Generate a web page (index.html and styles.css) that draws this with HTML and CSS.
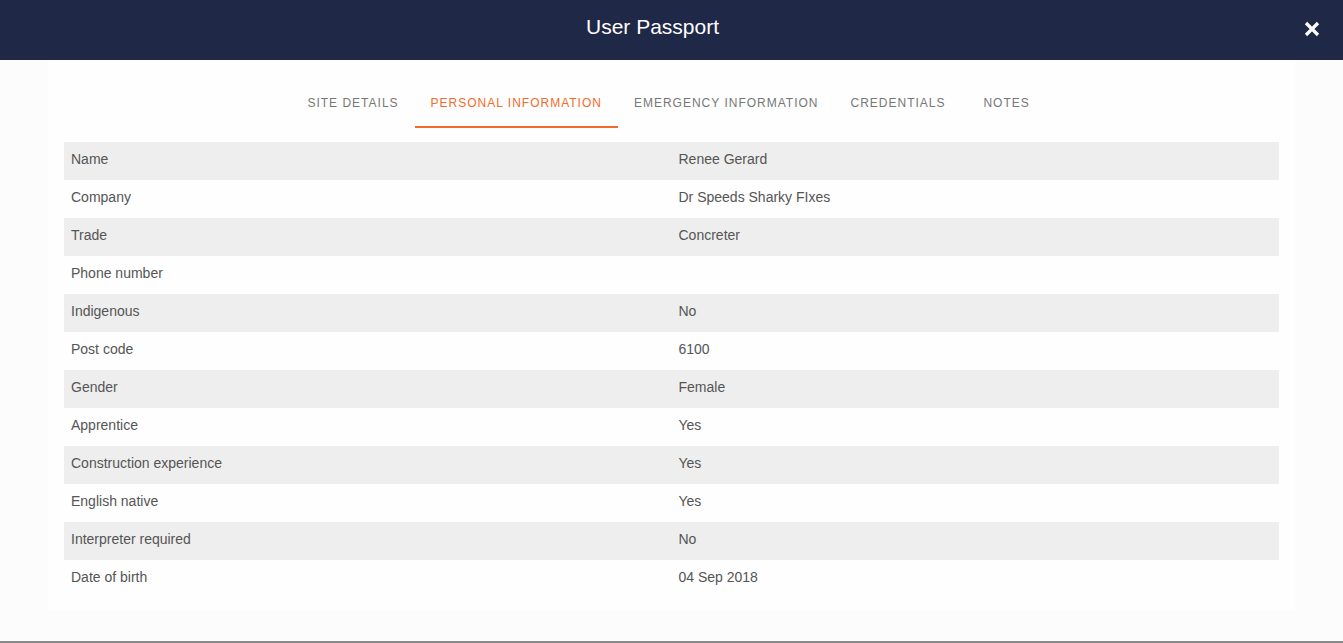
FILE: index.html
```html
<!DOCTYPE html>
<html lang="en">
<head>
    <meta charset="UTF-8">
    <meta name="viewport" content="width=device-width, initial-scale=1.0">
    <title>User Passport</title>
    <link rel="stylesheet" href="styles.css">
</head>
<body>
    <div class="modal">
        <header class="modal-header">
            <h1>User Passport</h1>
            <button class="close-button" aria-label="Close">
                <svg width="16" height="16" viewBox="0 0 16 16">
                    <path d="M2 2 L14 14 M14 2 L2 14" stroke="#fff" stroke-width="3.2" stroke-linecap="butt"/>
                </svg>
            </button>
        </header>

        <div class="modal-body">
            <nav class="tabs">
                <a href="#" class="tab">Site Details</a>
                <a href="#" class="tab active">Personal Information</a>
                <a href="#" class="tab">Emergency Information</a>
                <a href="#" class="tab">Credentials</a>
                <a href="#" class="tab">Notes</a>
            </nav>

            <table class="info-table">
                <tr><td>Name</td><td>Renee Gerard</td></tr>
                <tr><td>Company</td><td>Dr Speeds Sharky FIxes</td></tr>
                <tr><td>Trade</td><td>Concreter</td></tr>
                <tr><td>Phone number</td><td></td></tr>
                <tr><td>Indigenous</td><td>No</td></tr>
                <tr><td>Post code</td><td>6100</td></tr>
                <tr><td>Gender</td><td>Female</td></tr>
                <tr><td>Apprentice</td><td>Yes</td></tr>
                <tr><td>Construction experience</td><td>Yes</td></tr>
                <tr><td>English native</td><td>Yes</td></tr>
                <tr><td>Interpreter required</td><td>No</td></tr>
                <tr><td>Date of birth</td><td>04 Sep 2018</td></tr>
            </table>
        </div>
    </div>
</body>
</html>
```

FILE: styles.css
```css
html, body {
    margin: 0;
    padding: 0;
    height: 100%;
}

body {
    font-family: "Liberation Sans", Arial, Helvetica, sans-serif;
    background-color: #fcfcfc;
    border-bottom: 2px solid #8a8a8a;
    box-sizing: border-box;
}

.modal {
    height: 100%;
    display: flex;
    flex-direction: column;
}

/* Header bar */
.modal-header {
    height: 60px;
    background-color: #1f2847;
    display: flex;
    align-items: center;
    justify-content: center;
    padding-right: 38px;
    position: relative;
}

.modal-header h1 {
    margin: 0;
    color: #fff;
    font-size: 21px;
    font-weight: normal;
    padding-bottom: 6px;
}

.close-button {
    position: absolute;
    right: 23px;
    top: 21px;
    background: none;
    border: none;
    padding: 0;
    width: 16px;
    height: 16px;
    cursor: pointer;
}

.close-button svg {
    display: block;
}

/* Body panel */
.modal-body {
    margin: 0 48px;
    padding: 15px 16px 12px;
    background-color: #fefefe;
}

.tabs {
    display: flex;
    justify-content: center;
    margin-bottom: 14px;
}

.tab {
    box-sizing: border-box;
    min-width: 90px;
    padding: 21px 16px 16px;
    text-align: center;
    font-size: 12px;
    letter-spacing: 1px;
    text-transform: uppercase;
    color: #777;
    text-decoration: none;
    border-bottom: 2px solid transparent;
    line-height: 14px;
}

.tab.active {
    color: #f26b2a;
    border-bottom-color: #f26b2a;
}

/* Details table */
.info-table {
    width: 100%;
    border-collapse: collapse;
    table-layout: fixed;
}

.info-table td {
    height: 38px;
    padding: 0 7px 4px;
    font-size: 14px;
    color: #555;
    vertical-align: middle;
    box-sizing: border-box;
}

.info-table tr:nth-child(odd) {
    background-color: #eeeeee;
}
```
